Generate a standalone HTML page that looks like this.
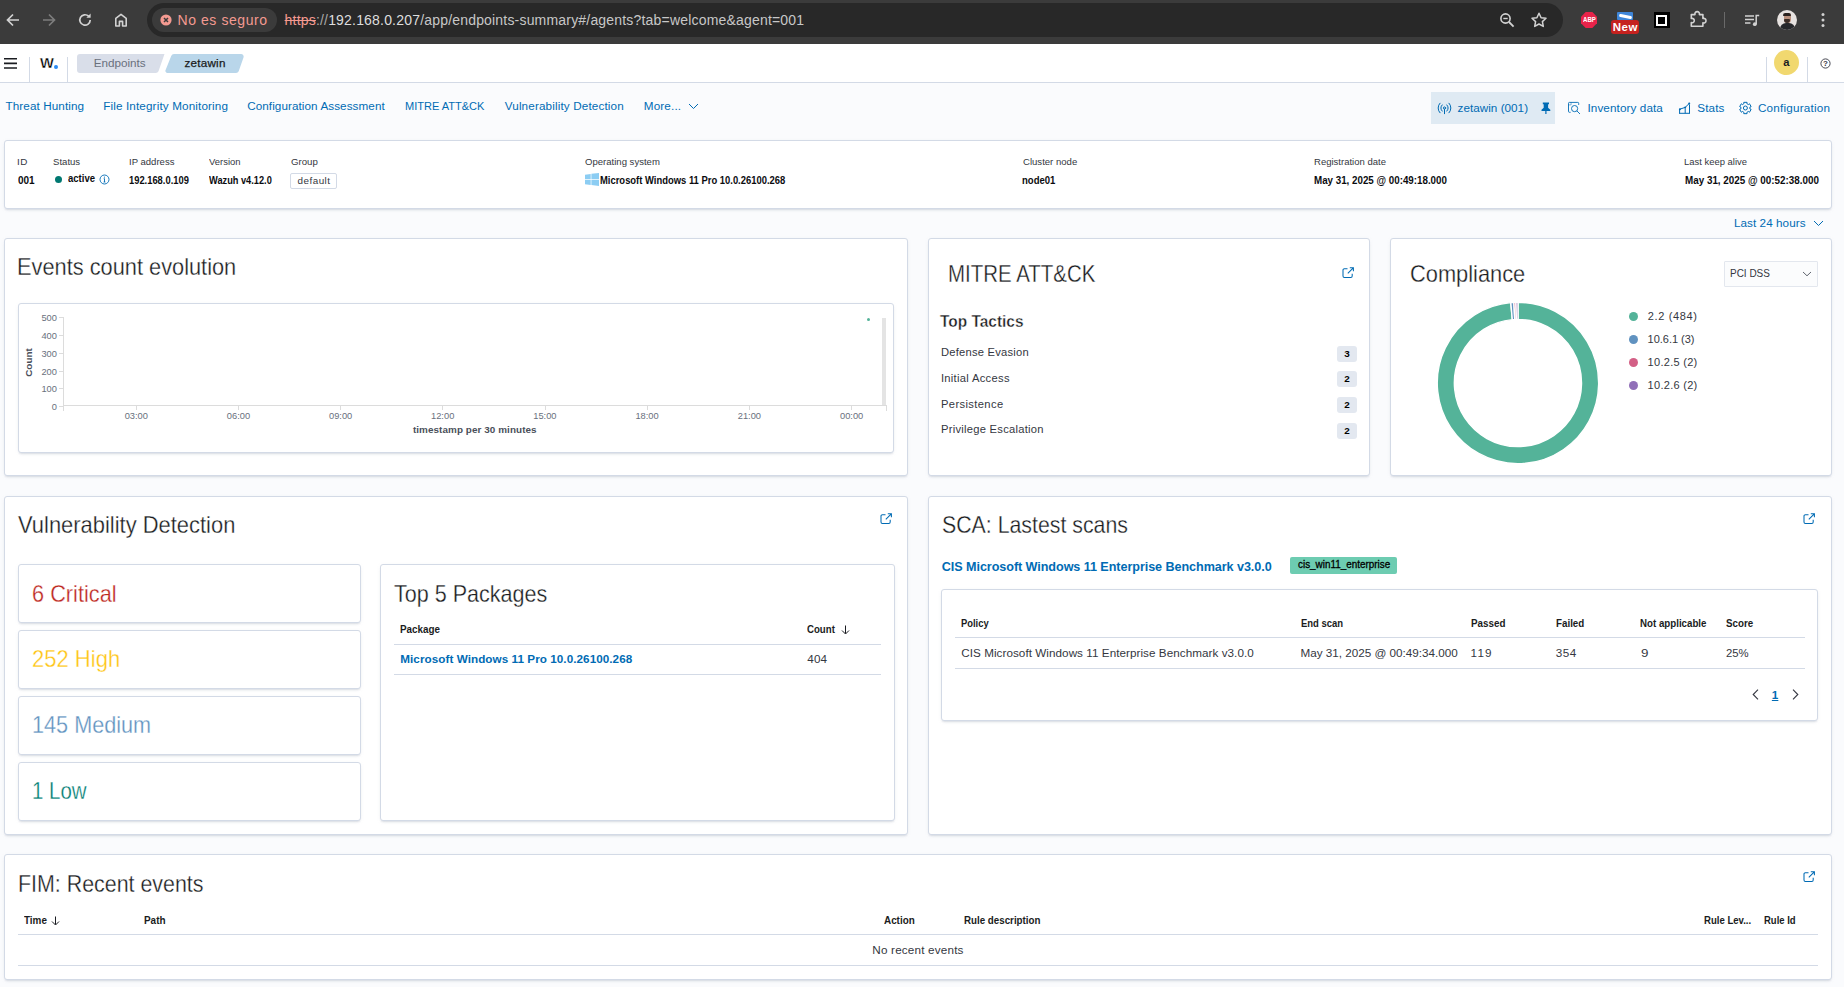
<!DOCTYPE html>
<html lang="es"><head><meta charset="utf-8"><title>Wazuh - Endpoints - zetawin</title>
<style>
html,body{margin:0;padding:0}
body{width:1844px;height:987px;overflow:hidden;background:#fafbfd;position:relative;
 font-family:"Liberation Sans",sans-serif;color:#343741;-webkit-font-smoothing:antialiased}
div,svg.ic,.t{position:absolute;box-sizing:border-box}
.t{white-space:nowrap;display:block}
.panel{background:#fff;border:1px solid #d3dae6;border-radius:3px;
 box-shadow:0 2px 2px -1px rgba(152,162,179,.3),0 1px 5px -2px rgba(152,162,179,.3)}
.hl{height:1px;background:#d3dae6}
.vl{width:1px;background:#d3dae6}
</style></head>
<body>
<div style="left:0px;top:0px;width:1844px;height:44px;background:#3b3b3b"></div>
<div style="left:147px;top:3px;width:1416px;height:34px;background:#282828;border-radius:17px"></div>
<div style="left:152px;top:8px;width:125px;height:24px;background:#3b3b3b;border-radius:12px"></div>
<svg class="ic" style="left:5px;top:12px;" width="16" height="16" viewBox="0 0 16 16"><path d="M14 8H3M8 2.5L2.5 8 8 13.5" fill="none" stroke="#d2d2d2" stroke-width="1.7"/></svg>
<svg class="ic" style="left:41px;top:12px;" width="16" height="16" viewBox="0 0 16 16"><path d="M2 8h11M8 2.5L13.5 8 8 13.5" fill="none" stroke="#7d7d7d" stroke-width="1.7"/></svg>
<svg class="ic" style="left:77px;top:12px;" width="16" height="16" viewBox="0 0 16 16"><path d="M13.2 8a5.2 5.2 0 1 1-1.6-3.8" fill="none" stroke="#d2d2d2" stroke-width="1.7"/><path d="M13.6 1.6v4.2H9.4z" fill="#d2d2d2"/></svg>
<svg class="ic" style="left:113px;top:12px;" width="16" height="16" viewBox="0 0 16 16"><path d="M2.8 14V6.4L8 2.4l5.2 4V14H9.6V9.4H6.4V14z" fill="none" stroke="#d2d2d2" stroke-width="1.6" stroke-linejoin="round"/></svg>
<svg class="ic" style="left:160px;top:14px;" width="12" height="12" viewBox="0 0 12 12"><circle cx="6" cy="6" r="5.6" fill="#f49a91"/><path d="M4 4l4 4M8 4l-4 4" stroke="#3b3b3b" stroke-width="1.5"/></svg>
<svg class="ic" style="left:1498px;top:11px;" width="18" height="18" viewBox="0 0 18 18"><circle cx="7.5" cy="7.5" r="4.6" fill="none" stroke="#d2d2d2" stroke-width="1.6"/><path d="M11 11l4.6 4.6" stroke="#d2d2d2" stroke-width="1.8"/><path d="M5.3 7.5h4.4" stroke="#d2d2d2" stroke-width="1.4"/></svg>
<svg class="ic" style="left:1530px;top:11px;" width="18" height="18" viewBox="0 0 18 18"><path d="M9 2.2l2.1 4.5 4.9.6-3.6 3.3.9 4.8L9 13l-4.3 2.4.9-4.8L2 7.3l4.9-.6z" fill="none" stroke="#d2d2d2" stroke-width="1.5" stroke-linejoin="round"/></svg>
<svg class="ic" style="left:1580px;top:11px;" width="18" height="18" viewBox="0 0 18 18"><path d="M5.7 1h6.6L17 5.7v6.6L12.3 17H5.7L1 12.3V5.7z" fill="#e8234a"/></svg>
<div style="left:1617px;top:12px;width:16px;height:8px;background:#3f86d9;border-radius:1px;overflow:hidden"><div style="left:2px;top:2.500px;width:13px;height:3px;background:#fff;border-radius:2px;transform:rotate(12deg)"></div></div>
<div style="left:1611px;top:20px;width:28px;height:14px;background:#c5221f;border-radius:3px"></div>
<div style="left:1653.5px;top:12px;width:16px;height:16px;background:#000"></div>
<div style="left:1656px;top:14.5px;width:11px;height:11px;background:#000;border:2.5px solid #fff"></div>
<svg class="ic" style="left:1688px;top:10px" width="20" height="19" viewBox="1688 10 20 19"><path d="M1691.300 14.600h3.700a2.300 2.300 0 1 1 4.400 0h3.500v3.900a2.300 2.300 0 1 1 0 4.300v3.500h-11.600v-3.700a2.200 2.200 0 1 0 0-4.100z" fill="none" stroke="#d2d2d2" stroke-width="1.6" stroke-linejoin="round"/></svg>
<div style="left:1724px;top:12px;width:1px;height:16px;background:#6a6a6a"></div>
<svg class="ic" style="left:1743px;top:11px;" width="18" height="18" viewBox="0 0 18 18"><path d="M2 5h9M2 8.5h9M2 12h5.5" stroke="#d2d2d2" stroke-width="1.5"/><path d="M13.2 13.2V4.6h3" fill="none" stroke="#d2d2d2" stroke-width="1.5"/><circle cx="11.8" cy="13.2" r="1.9" fill="#d2d2d2"/></svg>
<div style="left:1777px;top:10px;width:20px;height:20px;background:#e7e2e0;border-radius:50%;overflow:hidden"><div style="left:2.5px;top:12.5px;width:15px;height:10px;border-radius:6px 6px 0 0;background:#26272b"></div><div style="left:6.500px;top:3px;width:7px;height:9.500px;border-radius:3.500px;background:#b98f7c"></div><div style="left:6.300px;top:2.500px;width:7.400px;height:3.600px;border-radius:3.500px 3.500px 1px 1px;background:#2a211e"></div><div style="left:6.800px;top:8.600px;width:6.400px;height:4.200px;border-radius:1px 1px 3px 3px;background:#3a2c27"></div></div>
<svg class="ic" style="left:1820px;top:11px;" width="6" height="18" viewBox="0 0 6 18"><circle cx="3" cy="3.5" r="1.5" fill="#d2d2d2"/><circle cx="3" cy="9" r="1.5" fill="#d2d2d2"/><circle cx="3" cy="14.5" r="1.5" fill="#d2d2d2"/></svg>
<div style="left:0px;top:44px;width:1844px;height:39px;background:#fff;border-bottom:1px solid #d3dae6"></div>
<svg class="ic" style="left:4px;top:57px;" width="14" height="13" viewBox="0 0 14 13"><path d="M0 1.800h13M0 6.400h13M0 11h13" stroke="#1a1c21" stroke-width="1.6"/></svg>
<div class="vl" style="left:29px;top:57px;width:1px;height:25px;"></div>
<div class="vl" style="left:67px;top:57px;width:1px;height:25px;"></div>
<div style="left:54.2px;top:65.2px;width:3.8px;height:3.8px;background:#2d8cf5;border-radius:50%"></div>
<svg class="ic" style="left:77px;top:54px" width="170" height="19" viewBox="0 0 170 19"><path d="M3 0h84.5l-6 17.2a3 3 0 0 1-2.8 1.8H3a3 3 0 0 1-3-3V3a3 3 0 0 1 3-3z" fill="#d9dee9"/><path d="M97 0H164a2.600 2.600 0 0 1 2.500 3.400l-4.800 13.800a3 3 0 0 1-2.800 1.800H90.500a2.100 2.100 0 0 1-2-2.800L94.200 1.900A3 3 0 0 1 97 0z" fill="#b9d6ea"/></svg>
<div class="vl" style="left:1766px;top:57px;width:1px;height:25px;"></div>
<div class="vl" style="left:1807px;top:57px;width:1px;height:25px;"></div>
<div style="left:1774px;top:50px;width:25px;height:25px;background:#f1d86f;border-radius:50%"></div>
<svg class="ic" style="left:1820px;top:58px;" width="11" height="11" viewBox="0 0 11 11"><circle cx="5.5" cy="5.5" r="4.6" fill="none" stroke="#343741" stroke-width="0.9"/></svg>
<svg class="ic" style="left:688px;top:103px;" width="11" height="7" viewBox="0 0 11 7"><path d="M1 1l4.500 4.500L10 1" fill="none" stroke="#006bb4" stroke-width="1"/></svg>
<div style="left:1431px;top:92px;width:124px;height:32px;background:#dfeaf3"></div>
<svg class="ic" style="left:1436px;top:101px" width="17" height="15" viewBox="1436 101 17 15"><g fill="none" stroke="#006bb4" stroke-width="1" stroke-linecap="round"><circle cx="1444.5" cy="108" r="1.1"/><path d="M1444.5 109.300V113.700"/><path d="M1442.2 104.900A4.600 4.600 0 0 0 1442.2 111.100M1446.8 104.900A4.600 4.600 0 0 1 1446.8 111.100"/><path d="M1440.0 103.200A6.800 6.800 0 0 0 1440.0 112.800M1449.0 103.200A6.800 6.800 0 0 1 1449.0 112.800"/></g></svg>
<svg class="ic" style="left:1540px;top:102px" width="12" height="13" viewBox="1540 102 12 13"><path d="M1542.800 102.500h6.200v1.700h-.9v3.600l2.200 2v1.300h-3.800v2.800h-1.200v-2.800h-3.800v-1.300l2.200-2v-3.600h-.9z" fill="#006bb4"/></svg>
<svg class="ic" style="left:1567px;top:101px" width="15" height="14" viewBox="1567 101 15 14"><g fill="none" stroke="#006bb4" stroke-width="0.9"><path d="M1570.600 112.300H1569.400a.9.900 0 0 1-.9-.9V103.300a.9.900 0 0 1 .9-.9h8.400a.9.900 0 0 1 .9.900v1.600"/><path d="M1568.500 104.900h2.600M1571.100 102.500v2.400" stroke-opacity=".55"/><circle cx="1574.600" cy="108.600" r="3.100"/><path d="M1576.900 110.900l3.100 3.100"/></g></svg>
<svg class="ic" style="left:1678px;top:101px" width="14" height="14" viewBox="1678 101 14 14"><g fill="none" stroke="#006bb4" stroke-width="1"><path d="M1679 113.300H1690"/><path d="M1679.600 113.300V109.500M1685.200 113.300V108.300M1689.500 113.300V104.500"/><path d="M1679.800 109.200L1685.200 107.400 1689.300 103.400"/></g><circle cx="1679.900" cy="109.200" r="1" fill="#006bb4"/><circle cx="1685.200" cy="107.400" r="1" fill="#006bb4"/><circle cx="1689.200" cy="103.400" r="1" fill="#006bb4"/></svg>
<svg class="ic" style="left:1738px;top:101px" width="15" height="15" viewBox="1738 101 15 15"><g fill="none" stroke="#006bb4" stroke-width="1" stroke-linejoin="round"><circle cx="1745.400" cy="108" r="2"/><path d="M1743.75 102.33L1747.05 102.33L1746.87 103.64L1748.44 104.55L1749.48 103.74L1751.13 106.59L1749.91 107.09L1749.91 108.91L1751.13 109.41L1749.48 112.26L1748.44 111.45L1746.87 112.36L1747.05 113.67L1743.75 113.67L1743.93 112.36L1742.36 111.45L1741.32 112.26L1739.67 109.41L1740.89 108.91L1740.89 107.09L1739.67 106.59L1741.32 103.74L1742.36 104.55L1743.93 103.64Z"/></g></svg>
<div class="panel" style="left:4px;top:140px;width:1828px;height:69px;"></div>
<div style="left:54.5px;top:175.5px;width:7px;height:7px;background:#007871;border-radius:50%"></div>
<svg class="ic" style="left:99px;top:174px;" width="11" height="11" viewBox="0 0 11 11"><circle cx="5.5" cy="5.5" r="4.5" fill="none" stroke="#006bb4" stroke-width="0.9"/><path d="M5.5 4.6v3.400M4.600 8h1.800M4.700 4.700h.8" stroke="#006bb4" stroke-width="0.9" fill="none"/><circle cx="5.400" cy="3.100" r=".6" fill="#006bb4"/></svg>
<div style="left:290px;top:173px;width:47px;height:16px;border:1px solid #d3dae6;border-radius:2px;background:#fff"></div>
<svg class="ic" style="left:585px;top:173px;" width="14" height="13" viewBox="0 0 14 13"><path d="M0 1.700L5.700.9v5.200H0zM6.400.8L14 0v6.100H6.400zM0 6.800h5.700v5.200L0 11.200zM6.400 6.800H14V13l-7.600-.9z" fill="#8ccdf3"/></svg>
<svg class="ic" style="left:1813px;top:220px;" width="11" height="7" viewBox="0 0 11 7"><path d="M1 1l4.500 4.500L10 1" fill="none" stroke="#006bb4" stroke-width="1"/></svg>
<div class="panel" style="left:4px;top:238px;width:904px;height:238px;"></div>
<div class="panel" style="left:18px;top:303px;width:876px;height:150px;"></div>
<div style="left:63px;top:317px;width:1px;height:94px;background:#dcdcdc"></div>
<div style="left:63px;top:405px;width:824px;height:1px;background:#dcdcdc"></div>
<div style="left:886px;top:405px;width:1px;height:6px;background:#dcdcdc"></div>
<div style="left:59px;top:317px;width:4px;height:1px;background:#dcdcdc"></div>
<div style="left:59px;top:335px;width:4px;height:1px;background:#dcdcdc"></div>
<div style="left:59px;top:353px;width:4px;height:1px;background:#dcdcdc"></div>
<div style="left:59px;top:371px;width:4px;height:1px;background:#dcdcdc"></div>
<div style="left:59px;top:388px;width:4px;height:1px;background:#dcdcdc"></div>
<div style="left:59px;top:406px;width:4px;height:1px;background:#dcdcdc"></div>
<div style="left:136px;top:405px;width:1px;height:5px;background:#dcdcdc"></div>
<div style="left:238px;top:405px;width:1px;height:5px;background:#dcdcdc"></div>
<div style="left:340px;top:405px;width:1px;height:5px;background:#dcdcdc"></div>
<div style="left:442px;top:405px;width:1px;height:5px;background:#dcdcdc"></div>
<div style="left:545px;top:405px;width:1px;height:5px;background:#dcdcdc"></div>
<div style="left:647px;top:405px;width:1px;height:5px;background:#dcdcdc"></div>
<div style="left:749px;top:405px;width:1px;height:5px;background:#dcdcdc"></div>
<div style="left:851px;top:405px;width:1px;height:5px;background:#dcdcdc"></div>
<div style="left:882px;top:318px;width:4px;height:87px;background:#e4e4e4"></div>
<div style="left:867px;top:318px;width:3px;height:3px;background:#54b399;border-radius:50%"></div>
<div class="panel" style="left:928px;top:238px;width:442px;height:238px;"></div>
<svg class="ic" style="left:1341.5px;top:267px;" width="12" height="12" viewBox="0 0 12 12"><g fill="none" stroke="#006bb4" stroke-width="1.05"><path d="M10.200 6.700V9.100a1.400 1.400 0 0 1-1.400 1.400H2.400A1.400 1.400 0 0 1 1 9.100V3.100a1.400 1.400 0 0 1 1.400-1.400h3.100"/><path d="M7.800.7h3.600v3.600M11.300.8L5.800 6.300"/></g></svg>
<div style="left:1337px;top:346.2px;width:20px;height:15.6px;background:#e3e8f0;border-radius:3px"></div>
<div style="left:1337px;top:371.1px;width:20px;height:15.6px;background:#e3e8f0;border-radius:3px"></div>
<div style="left:1337px;top:397.1px;width:20px;height:15.6px;background:#e3e8f0;border-radius:3px"></div>
<div style="left:1337px;top:423.2px;width:20px;height:15.6px;background:#e3e8f0;border-radius:3px"></div>
<div class="panel" style="left:1390px;top:238px;width:442px;height:238px;"></div>
<div style="left:1724px;top:261px;width:94px;height:25.5px;background:#fbfcfd;border:1px solid #e3e7ee;border-radius:1px"></div>
<svg class="ic" style="left:1802px;top:271px;" width="10" height="6" viewBox="0 0 10 6"><path d="M1 1l4 3.800L9 1" fill="none" stroke="#4f5560" stroke-width="0.9"/></svg>
<svg class="ic" style="left:1427.7px;top:293px;" width="180" height="180" viewBox="0 0 180 180"><path d="M90.00 9.30A80.7 80.7 0 1 1 82.78 9.62L84.31 26.65A63.6 63.6 0 1 0 90.00 26.40Z" fill="#54b399" stroke="#fff" stroke-width="1.4"/><path d="M82.78 9.62A80.7 80.7 0 0 1 85.87 9.41L86.75 26.48A63.6 63.6 0 0 0 84.31 26.65Z" fill="#6092c0" stroke="#fff" stroke-width="1.4"/><path d="M85.87 9.41A80.7 80.7 0 0 1 87.93 9.33L88.37 26.42A63.6 63.6 0 0 0 86.75 26.48Z" fill="#d36086" stroke="#fff" stroke-width="1.4"/><path d="M87.93 9.33A80.7 80.7 0 0 1 90.00 9.30L90.00 26.40A63.6 63.6 0 0 0 88.37 26.42Z" fill="#9170b8" stroke="#fff" stroke-width="1.4"/></svg>
<div style="left:1628.8px;top:311.6px;width:9.6px;height:9.6px;background:#54b399;border-radius:50%"></div>
<div style="left:1628.8px;top:334.8px;width:9.6px;height:9.6px;background:#6092c0;border-radius:50%"></div>
<div style="left:1628.8px;top:357.7px;width:9.6px;height:9.6px;background:#d36086;border-radius:50%"></div>
<div style="left:1628.8px;top:380.5px;width:9.6px;height:9.6px;background:#9170b8;border-radius:50%"></div>
<div class="panel" style="left:4px;top:496px;width:904px;height:339px;"></div>
<svg class="ic" style="left:880px;top:513px;" width="12" height="12" viewBox="0 0 12 12"><g fill="none" stroke="#006bb4" stroke-width="1.05"><path d="M10.200 6.700V9.100a1.400 1.400 0 0 1-1.400 1.400H2.400A1.400 1.400 0 0 1 1 9.100V3.100a1.400 1.400 0 0 1 1.400-1.400h3.100"/><path d="M7.800.7h3.600v3.600M11.300.8L5.800 6.300"/></g></svg>
<div class="panel" style="left:18px;top:564px;width:343px;height:59px;"></div>
<div class="panel" style="left:18px;top:630px;width:343px;height:59px;"></div>
<div class="panel" style="left:18px;top:696px;width:343px;height:59px;"></div>
<div class="panel" style="left:18px;top:762px;width:343px;height:59px;"></div>
<div class="panel" style="left:380px;top:564px;width:515px;height:257px;"></div>
<svg class="ic" style="left:840.5px;top:625px;" width="9" height="10" viewBox="0 0 9 10"><path d="M4.500.5v8M1 5.500l3.500 3.500L8 5.500" fill="none" stroke="#1a1c21" stroke-width="1"/></svg>
<div class="hl" style="left:394px;top:644px;width:487px;height:1px;"></div>
<div class="hl" style="left:394px;top:674px;width:487px;height:1px;"></div>
<div class="panel" style="left:928px;top:496px;width:904px;height:339px;"></div>
<svg class="ic" style="left:1803px;top:513px;" width="12" height="12" viewBox="0 0 12 12"><g fill="none" stroke="#006bb4" stroke-width="1.05"><path d="M10.200 6.700V9.100a1.400 1.400 0 0 1-1.400 1.400H2.400A1.400 1.400 0 0 1 1 9.100V3.100a1.400 1.400 0 0 1 1.400-1.400h3.100"/><path d="M7.800.7h3.600v3.600M11.300.8L5.800 6.300"/></g></svg>
<div style="left:1290px;top:557px;width:107px;height:17px;background:#6dccb1;border-radius:2px"></div>
<div class="panel" style="left:941px;top:589px;width:877px;height:131.5px;"></div>
<div class="hl" style="left:955px;top:637px;width:850px;height:1px;"></div>
<div class="hl" style="left:955px;top:668px;width:850px;height:1px;"></div>
<svg class="ic" style="left:1752px;top:689px;" width="7" height="11" viewBox="0 0 7 11"><path d="M6 .7L1.200 5.500 6 10.300" fill="none" stroke="#343741" stroke-width="1.1"/></svg>
<svg class="ic" style="left:1792px;top:689px;" width="7" height="11" viewBox="0 0 7 11"><path d="M1 .7l4.800 4.800L1 10.300" fill="none" stroke="#343741" stroke-width="1.1"/></svg>
<div class="panel" style="left:4px;top:854px;width:1828px;height:126px;"></div>
<svg class="ic" style="left:1803px;top:871px;" width="12" height="12" viewBox="0 0 12 12"><g fill="none" stroke="#006bb4" stroke-width="1.05"><path d="M10.200 6.700V9.100a1.400 1.400 0 0 1-1.400 1.400H2.400A1.400 1.400 0 0 1 1 9.100V3.100a1.400 1.400 0 0 1 1.400-1.400h3.100"/><path d="M7.800.7h3.600v3.600M11.300.8L5.800 6.300"/></g></svg>
<svg class="ic" style="left:51px;top:915.5px;" width="9" height="10" viewBox="0 0 9 10"><path d="M4.500.5v8M1 5.500l3.500 3.500L8 5.500" fill="none" stroke="#1a1c21" stroke-width="1"/></svg>
<div class="hl" style="left:18px;top:934px;width:1800px;height:1px;"></div>
<div class="hl" style="left:18px;top:965px;width:1800px;height:1px;"></div>
<span class="t" style="left:177.51px;top:11.00px;font-size:14px;line-height:18px;font-weight:400;color:#f49a91;letter-spacing:0.572px;">No es seguro</span>
<span class="t" style="left:284.62px;top:11.00px;font-size:14px;line-height:18px;font-weight:400;color:#c7c7c7;letter-spacing:0.188px;"><span style="color:#f49a91;text-decoration:line-through">https</span><span style="color:#a8a8a8">://</span><span style="color:#dedede">192.168.0.207</span>/app/endpoints-summary#/agents?tab=welcome&amp;agent=001</span>
<span class="t" style="left:1582.86px;top:16.00px;font-size:6.5px;line-height:8px;font-weight:700;color:#fff;letter-spacing:0.000px;transform:scaleX(0.9337);transform-origin:0 50%;">ABP</span>
<span class="t" style="left:1612.75px;top:19.50px;font-size:11.5px;line-height:15px;font-weight:700;color:#fff;letter-spacing:0.525px;">New</span>
<span class="t" style="left:39.60px;top:54.20px;font-size:14.5px;line-height:19px;font-weight:700;color:#000;letter-spacing:0.000px;transform:scaleX(1.0130);transform-origin:0 50%;-webkit-text-stroke:0.35px #fff;">W</span>
<span class="t" style="left:93.75px;top:54.90px;font-size:11.7px;line-height:15px;font-weight:400;color:#69707d;letter-spacing:-0.024px;">Endpoints</span>
<span class="t" style="left:184.55px;top:54.90px;font-size:11.7px;line-height:15px;font-weight:400;color:#1a1c21;letter-spacing:0.206px;-webkit-text-stroke:0.25px #1a1c21;">zetawin</span>
<span class="t" style="left:1783.30px;top:55.30px;font-size:11.2px;line-height:15px;font-weight:700;color:#1a1c21;letter-spacing:0.000px;">a</span>
<span class="t" style="left:1823.10px;top:59.10px;font-size:8px;line-height:10px;font-weight:700;color:#343741;letter-spacing:0.000px;">?</span>
<span class="t" style="left:5.55px;top:97.80px;font-size:11.7px;line-height:15px;font-weight:400;color:#006bb4;letter-spacing:0.090px;">Threat Hunting</span>
<span class="t" style="left:103.15px;top:97.80px;font-size:11.7px;line-height:15px;font-weight:400;color:#006bb4;letter-spacing:0.140px;">File Integrity Monitoring</span>
<span class="t" style="left:247.15px;top:97.80px;font-size:11.7px;line-height:15px;font-weight:400;color:#006bb4;letter-spacing:0.080px;">Configuration Assessment</span>
<span class="t" style="left:404.50px;top:97.80px;font-size:11.7px;line-height:15px;font-weight:400;color:#006bb4;letter-spacing:0.000px;transform:scaleX(0.9430);transform-origin:0 50%;">MITRE ATT&amp;CK</span>
<span class="t" style="left:504.75px;top:97.80px;font-size:11.7px;line-height:15px;font-weight:400;color:#006bb4;letter-spacing:0.138px;">Vulnerability Detection</span>
<span class="t" style="left:643.85px;top:97.80px;font-size:11.7px;line-height:15px;font-weight:400;color:#006bb4;letter-spacing:0.132px;">More...</span>
<span class="t" style="left:1457.55px;top:100.00px;font-size:11.7px;line-height:15px;font-weight:400;color:#006bb4;letter-spacing:0.026px;">zetawin (001)</span>
<span class="t" style="left:1587.45px;top:100.00px;font-size:11.7px;line-height:15px;font-weight:400;color:#006bb4;letter-spacing:0.105px;">Inventory data</span>
<span class="t" style="left:1697.30px;top:100.00px;font-size:11.7px;line-height:15px;font-weight:400;color:#006bb4;letter-spacing:0.109px;">Stats</span>
<span class="t" style="left:1757.95px;top:100.00px;font-size:11.7px;line-height:15px;font-weight:400;color:#006bb4;letter-spacing:0.209px;">Configuration</span>
<span class="t" style="left:17.10px;top:155.10px;font-size:9.9px;line-height:13px;font-weight:400;color:#343741;letter-spacing:0.449px;">ID</span>
<span class="t" style="left:53.11px;top:155.10px;font-size:9.9px;line-height:13px;font-weight:400;color:#343741;letter-spacing:0.000px;transform:scaleX(0.9701);transform-origin:0 50%;">Status</span>
<span class="t" style="left:128.63px;top:155.10px;font-size:9.9px;line-height:13px;font-weight:400;color:#343741;letter-spacing:0.000px;transform:scaleX(0.9658);transform-origin:0 50%;">IP address</span>
<span class="t" style="left:208.50px;top:155.10px;font-size:9.9px;line-height:13px;font-weight:400;color:#343741;letter-spacing:0.000px;transform:scaleX(0.9563);transform-origin:0 50%;">Version</span>
<span class="t" style="left:290.96px;top:155.10px;font-size:9.9px;line-height:13px;font-weight:400;color:#343741;letter-spacing:0.000px;transform:scaleX(0.9790);transform-origin:0 50%;">Group</span>
<span class="t" style="left:584.56px;top:155.10px;font-size:9.9px;line-height:13px;font-weight:400;color:#343741;letter-spacing:0.000px;transform:scaleX(0.9675);transform-origin:0 50%;">Operating system</span>
<span class="t" style="left:1022.52px;top:155.10px;font-size:9.9px;line-height:13px;font-weight:400;color:#343741;letter-spacing:0.000px;transform:scaleX(0.9687);transform-origin:0 50%;">Cluster node</span>
<span class="t" style="left:1313.73px;top:155.10px;font-size:9.9px;line-height:13px;font-weight:400;color:#343741;letter-spacing:0.000px;transform:scaleX(0.9642);transform-origin:0 50%;">Registration date</span>
<span class="t" style="left:1684.43px;top:155.10px;font-size:9.9px;line-height:13px;font-weight:400;color:#343741;letter-spacing:0.000px;transform:scaleX(0.9563);transform-origin:0 50%;">Last keep alive</span>
<span class="t" style="left:17.62px;top:173.20px;font-size:10.6px;line-height:14px;font-weight:700;color:#0b0c0f;letter-spacing:0.000px;transform:scaleX(0.9417);transform-origin:0 50%;">001</span>
<span class="t" style="left:128.93px;top:173.20px;font-size:10.6px;line-height:14px;font-weight:700;color:#0b0c0f;letter-spacing:0.000px;transform:scaleX(0.8833);transform-origin:0 50%;">192.168.0.109</span>
<span class="t" style="left:208.50px;top:173.20px;font-size:10.6px;line-height:14px;font-weight:700;color:#0b0c0f;letter-spacing:0.000px;transform:scaleX(0.8720);transform-origin:0 50%;">Wazuh v4.12.0</span>
<span class="t" style="left:599.88px;top:173.20px;font-size:10.6px;line-height:14px;font-weight:700;color:#0b0c0f;letter-spacing:0.000px;transform:scaleX(0.8893);transform-origin:0 50%;">Microsoft Windows 11 Pro 10.0.26100.268</span>
<span class="t" style="left:1022.42px;top:173.20px;font-size:10.6px;line-height:14px;font-weight:700;color:#0b0c0f;letter-spacing:0.000px;transform:scaleX(0.8987);transform-origin:0 50%;">node01</span>
<span class="t" style="left:1313.85px;top:173.20px;font-size:10.6px;line-height:14px;font-weight:700;color:#0b0c0f;letter-spacing:0.000px;transform:scaleX(0.9230);transform-origin:0 50%;">May 31, 2025 @ 00:49:18.000</span>
<span class="t" style="left:1684.55px;top:173.20px;font-size:10.6px;line-height:14px;font-weight:700;color:#0b0c0f;letter-spacing:0.000px;transform:scaleX(0.9299);transform-origin:0 50%;">May 31, 2025 @ 00:52:38.000</span>
<span class="t" style="left:67.73px;top:171.10px;font-size:10.6px;line-height:14px;font-weight:700;color:#0b0c0f;letter-spacing:0.000px;transform:scaleX(0.9010);transform-origin:0 50%;">active</span>
<span class="t" style="left:297.60px;top:174.20px;font-size:9.9px;line-height:13px;font-weight:400;color:#343741;letter-spacing:0.454px;">default</span>
<span class="t" style="left:1733.95px;top:214.60px;font-size:11.7px;line-height:15px;font-weight:400;color:#006bb4;letter-spacing:0.063px;">Last 24 hours</span>
<span class="t" style="left:17.20px;top:251.50px;font-size:23.4px;line-height:30px;font-weight:400;color:#1a1c21;letter-spacing:0.000px;transform:scaleX(0.9315);transform-origin:0 50%;-webkit-text-stroke:0.3px #fff;">Events count evolution</span>
<span class="t" style="left:41.41px;top:311.90px;font-size:9.3px;line-height:12px;font-weight:400;color:#69707d;letter-spacing:0.000px;">500</span>
<span class="t" style="left:41.41px;top:329.80px;font-size:9.3px;line-height:12px;font-weight:400;color:#69707d;letter-spacing:0.000px;">400</span>
<span class="t" style="left:41.41px;top:347.80px;font-size:9.3px;line-height:12px;font-weight:400;color:#69707d;letter-spacing:0.000px;">300</span>
<span class="t" style="left:41.41px;top:365.60px;font-size:9.3px;line-height:12px;font-weight:400;color:#69707d;letter-spacing:0.000px;">200</span>
<span class="t" style="left:41.41px;top:382.50px;font-size:9.3px;line-height:12px;font-weight:400;color:#69707d;letter-spacing:0.000px;">100</span>
<span class="t" style="left:51.75px;top:400.50px;font-size:9.3px;line-height:12px;font-weight:400;color:#69707d;letter-spacing:0.000px;">0</span>
<span class="t" style="left:124.65px;top:410.00px;font-size:9.3px;line-height:12px;font-weight:400;color:#69707d;letter-spacing:0.000px;">03:00</span>
<span class="t" style="left:226.84px;top:410.00px;font-size:9.3px;line-height:12px;font-weight:400;color:#69707d;letter-spacing:0.000px;">06:00</span>
<span class="t" style="left:329.03px;top:410.00px;font-size:9.3px;line-height:12px;font-weight:400;color:#69707d;letter-spacing:0.000px;">09:00</span>
<span class="t" style="left:431.04px;top:410.00px;font-size:9.3px;line-height:12px;font-weight:400;color:#69707d;letter-spacing:0.000px;">12:00</span>
<span class="t" style="left:533.23px;top:410.00px;font-size:9.3px;line-height:12px;font-weight:400;color:#69707d;letter-spacing:0.000px;">15:00</span>
<span class="t" style="left:635.42px;top:410.00px;font-size:9.3px;line-height:12px;font-weight:400;color:#69707d;letter-spacing:0.000px;">18:00</span>
<span class="t" style="left:737.74px;top:410.00px;font-size:9.3px;line-height:12px;font-weight:400;color:#69707d;letter-spacing:0.000px;">21:00</span>
<span class="t" style="left:839.98px;top:410.00px;font-size:9.3px;line-height:12px;font-weight:400;color:#69707d;letter-spacing:0.000px;">00:00</span>
<span class="t" style="left:412.90px;top:423.20px;font-size:9.9px;line-height:13px;font-weight:700;color:#4a4f5a;letter-spacing:0.081px;">timestamp per 30 minutes</span>
<span class="t" style="left:14.15px;top:355.50px;font-size:9.9px;line-height:13px;font-weight:700;color:#4a4f5a;letter-spacing:0.000px;transform:rotate(-90deg);transform-origin:50% 50%;">Count</span>
<span class="t" style="left:947.60px;top:258.90px;font-size:23.4px;line-height:30px;font-weight:400;color:#1a1c21;letter-spacing:0.000px;transform:scaleX(0.8743);transform-origin:0 50%;-webkit-text-stroke:0.3px #fff;">MITRE ATT&amp;CK</span>
<span class="t" style="left:940.40px;top:310.80px;font-size:15.8px;line-height:21px;font-weight:700;color:#1a1c21;letter-spacing:0.000px;transform:scaleX(0.9775);transform-origin:0 50%;-webkit-text-stroke:0.35px #fff;">Top Tactics</span>
<span class="t" style="left:941.00px;top:345.30px;font-size:11.2px;line-height:15px;font-weight:400;color:#343741;letter-spacing:0.222px;">Defense Evasion</span>
<span class="t" style="left:1344.33px;top:347.00px;font-size:9.9px;line-height:13px;font-weight:700;color:#000;letter-spacing:0.000px;">3</span>
<span class="t" style="left:940.90px;top:371.40px;font-size:11.2px;line-height:15px;font-weight:400;color:#343741;letter-spacing:0.303px;">Initial Access</span>
<span class="t" style="left:1344.28px;top:371.90px;font-size:9.9px;line-height:13px;font-weight:700;color:#000;letter-spacing:0.000px;">2</span>
<span class="t" style="left:941.00px;top:397.40px;font-size:11.2px;line-height:15px;font-weight:400;color:#343741;letter-spacing:0.366px;">Persistence</span>
<span class="t" style="left:1344.28px;top:397.90px;font-size:9.9px;line-height:13px;font-weight:700;color:#000;letter-spacing:0.000px;">2</span>
<span class="t" style="left:941.00px;top:422.30px;font-size:11.2px;line-height:15px;font-weight:400;color:#343741;letter-spacing:0.260px;">Privilege Escalation</span>
<span class="t" style="left:1344.28px;top:424.00px;font-size:9.9px;line-height:13px;font-weight:700;color:#000;letter-spacing:0.000px;">2</span>
<span class="t" style="left:1409.58px;top:258.90px;font-size:23.4px;line-height:30px;font-weight:400;color:#1a1c21;letter-spacing:0.000px;transform:scaleX(0.9332);transform-origin:0 50%;-webkit-text-stroke:0.3px #fff;">Compliance</span>
<span class="t" style="left:1730.22px;top:266.00px;font-size:10.8px;line-height:14px;font-weight:400;color:#343741;letter-spacing:0.000px;transform:scaleX(0.9235);transform-origin:0 50%;">PCI DSS</span>
<span class="t" style="left:1647.85px;top:309.00px;font-size:11px;line-height:14px;font-weight:400;color:#343741;letter-spacing:0.623px;">2.2 (484)</span>
<span class="t" style="left:1647.60px;top:332.00px;font-size:11px;line-height:14px;font-weight:400;color:#343741;letter-spacing:-0.024px;">10.6.1 (3)</span>
<span class="t" style="left:1647.60px;top:354.80px;font-size:11px;line-height:14px;font-weight:400;color:#343741;letter-spacing:0.287px;">10.2.5 (2)</span>
<span class="t" style="left:1647.60px;top:377.70px;font-size:11px;line-height:14px;font-weight:400;color:#343741;letter-spacing:0.287px;">10.2.6 (2)</span>
<span class="t" style="left:18.00px;top:510.00px;font-size:23.4px;line-height:30px;font-weight:400;color:#1a1c21;letter-spacing:0.000px;transform:scaleX(0.9374);transform-origin:0 50%;-webkit-text-stroke:0.3px #fff;">Vulnerability Detection</span>
<span class="t" style="left:32.28px;top:578.80px;font-size:23.4px;line-height:30px;font-weight:400;color:#bd271e;letter-spacing:0.000px;transform:scaleX(0.9301);transform-origin:0 50%;-webkit-text-stroke:0.3px #fff;">6 Critical</span>
<span class="t" style="left:32.27px;top:643.80px;font-size:23.4px;line-height:30px;font-weight:400;color:#fec514;letter-spacing:0.000px;transform:scaleX(0.9413);transform-origin:0 50%;-webkit-text-stroke:0.3px #fff;">252 High</span>
<span class="t" style="left:31.95px;top:709.60px;font-size:23.4px;line-height:30px;font-weight:400;color:#6092c0;letter-spacing:0.000px;transform:scaleX(0.9255);transform-origin:0 50%;-webkit-text-stroke:0.3px #fff;">145 Medium</span>
<span class="t" style="left:32.02px;top:775.90px;font-size:23.4px;line-height:30px;font-weight:400;color:#017d73;letter-spacing:0.000px;transform:scaleX(0.8733);transform-origin:0 50%;-webkit-text-stroke:0.3px #fff;">1 Low</span>
<span class="t" style="left:394.46px;top:578.50px;font-size:23.4px;line-height:30px;font-weight:400;color:#1a1c21;letter-spacing:0.000px;transform:scaleX(0.9213);transform-origin:0 50%;-webkit-text-stroke:0.3px #fff;">Top 5 Packages</span>
<span class="t" style="left:400.07px;top:623.10px;font-size:10.2px;line-height:13px;font-weight:700;color:#1a1c21;letter-spacing:0.000px;transform:scaleX(0.9672);transform-origin:0 50%;">Package</span>
<span class="t" style="left:807.12px;top:623.10px;font-size:10.2px;line-height:13px;font-weight:700;color:#1a1c21;letter-spacing:0.000px;transform:scaleX(0.9462);transform-origin:0 50%;">Count</span>
<span class="t" style="left:400.25px;top:651.10px;font-size:11.7px;line-height:15px;font-weight:700;color:#006bb4;letter-spacing:0.056px;">Microsoft Windows 11 Pro 10.0.26100.268</span>
<span class="t" style="left:807.25px;top:651.10px;font-size:11.7px;line-height:15px;font-weight:400;color:#343741;letter-spacing:0.168px;">404</span>
<span class="t" style="left:941.63px;top:510.00px;font-size:23.4px;line-height:30px;font-weight:400;color:#1a1c21;letter-spacing:0.000px;transform:scaleX(0.9111);transform-origin:0 50%;-webkit-text-stroke:0.3px #fff;">SCA: Lastest scans</span>
<span class="t" style="left:941.80px;top:558.90px;font-size:12.6px;line-height:16px;font-weight:700;color:#006bb4;letter-spacing:-0.062px;">CIS Microsoft Windows 11 Enterprise Benchmark v3.0.0</span>
<span class="t" style="left:1297.58px;top:557.10px;font-size:10.6px;line-height:14px;font-weight:400;color:#000;letter-spacing:0.000px;transform:scaleX(0.9337);transform-origin:0 50%;-webkit-text-stroke:0.3px #000;">cis_win11_enterprise</span>
<span class="t" style="left:961.20px;top:617.10px;font-size:10.2px;line-height:13px;font-weight:700;color:#1a1c21;letter-spacing:0.000px;transform:scaleX(0.9226);transform-origin:0 50%;">Policy</span>
<span class="t" style="left:1300.90px;top:617.10px;font-size:10.2px;line-height:13px;font-weight:700;color:#1a1c21;letter-spacing:0.000px;transform:scaleX(0.9304);transform-origin:0 50%;">End scan</span>
<span class="t" style="left:1470.77px;top:617.10px;font-size:10.2px;line-height:13px;font-weight:700;color:#1a1c21;letter-spacing:0.000px;transform:scaleX(0.9639);transform-origin:0 50%;">Passed</span>
<span class="t" style="left:1555.58px;top:617.10px;font-size:10.2px;line-height:13px;font-weight:700;color:#1a1c21;letter-spacing:0.000px;transform:scaleX(0.9612);transform-origin:0 50%;">Failed</span>
<span class="t" style="left:1640.48px;top:617.10px;font-size:10.2px;line-height:13px;font-weight:700;color:#1a1c21;letter-spacing:0.000px;transform:scaleX(0.9543);transform-origin:0 50%;">Not applicable</span>
<span class="t" style="left:1725.96px;top:617.10px;font-size:10.2px;line-height:13px;font-weight:700;color:#1a1c21;letter-spacing:0.000px;transform:scaleX(0.9577);transform-origin:0 50%;">Score</span>
<span class="t" style="left:961.25px;top:645.00px;font-size:11.7px;line-height:15px;font-weight:400;color:#343741;letter-spacing:0.046px;">CIS Microsoft Windows 11 Enterprise Benchmark v3.0.0</span>
<span class="t" style="left:1300.55px;top:645.00px;font-size:11.7px;line-height:15px;font-weight:400;color:#343741;letter-spacing:-0.007px;">May 31, 2025 @ 00:49:34.000</span>
<span class="t" style="left:1470.55px;top:645.00px;font-size:11.7px;line-height:15px;font-weight:400;color:#343741;letter-spacing:1.202px;">119</span>
<span class="t" style="left:1555.80px;top:645.00px;font-size:11.7px;line-height:15px;font-weight:400;color:#343741;letter-spacing:0.493px;">354</span>
<span class="t" style="left:1640.53px;top:645.00px;font-size:11.7px;line-height:15px;font-weight:400;color:#343741;letter-spacing:0.000px;transform:scaleX(1.1455);transform-origin:0 50%;">9</span>
<span class="t" style="left:1725.67px;top:645.00px;font-size:11.7px;line-height:15px;font-weight:400;color:#343741;letter-spacing:0.000px;transform:scaleX(0.9704);transform-origin:0 50%;">25%</span>
<span class="t" style="left:1771.85px;top:686.60px;font-size:11.7px;line-height:15px;font-weight:700;color:#006bb4;letter-spacing:0.000px;text-decoration:underline;">1</span>
<span class="t" style="left:17.73px;top:868.50px;font-size:23.4px;line-height:30px;font-weight:400;color:#1a1c21;letter-spacing:0.000px;transform:scaleX(0.9146);transform-origin:0 50%;-webkit-text-stroke:0.3px #fff;">FIM: Recent events</span>
<span class="t" style="left:23.80px;top:913.90px;font-size:10.2px;line-height:13px;font-weight:700;color:#1a1c21;letter-spacing:0.000px;transform:scaleX(0.9698);transform-origin:0 50%;">Time</span>
<span class="t" style="left:143.97px;top:913.90px;font-size:10.2px;line-height:13px;font-weight:700;color:#1a1c21;letter-spacing:0.000px;transform:scaleX(0.9749);transform-origin:0 50%;">Path</span>
<span class="t" style="left:884.36px;top:913.90px;font-size:10.2px;line-height:13px;font-weight:700;color:#1a1c21;letter-spacing:0.000px;transform:scaleX(0.9692);transform-origin:0 50%;">Action</span>
<span class="t" style="left:963.78px;top:913.90px;font-size:10.2px;line-height:13px;font-weight:700;color:#1a1c21;letter-spacing:0.000px;transform:scaleX(0.9576);transform-origin:0 50%;">Rule description</span>
<span class="t" style="left:1704.39px;top:913.90px;font-size:10.2px;line-height:13px;font-weight:700;color:#1a1c21;letter-spacing:0.000px;transform:scaleX(0.9402);transform-origin:0 50%;">Rule Lev...</span>
<span class="t" style="left:1764.39px;top:913.90px;font-size:10.2px;line-height:13px;font-weight:700;color:#1a1c21;letter-spacing:0.000px;transform:scaleX(0.9321);transform-origin:0 50%;">Rule Id</span>
<span class="t" style="left:872.35px;top:941.70px;font-size:11.7px;line-height:15px;font-weight:400;color:#343741;letter-spacing:0.180px;">No recent events</span>
</body></html>
